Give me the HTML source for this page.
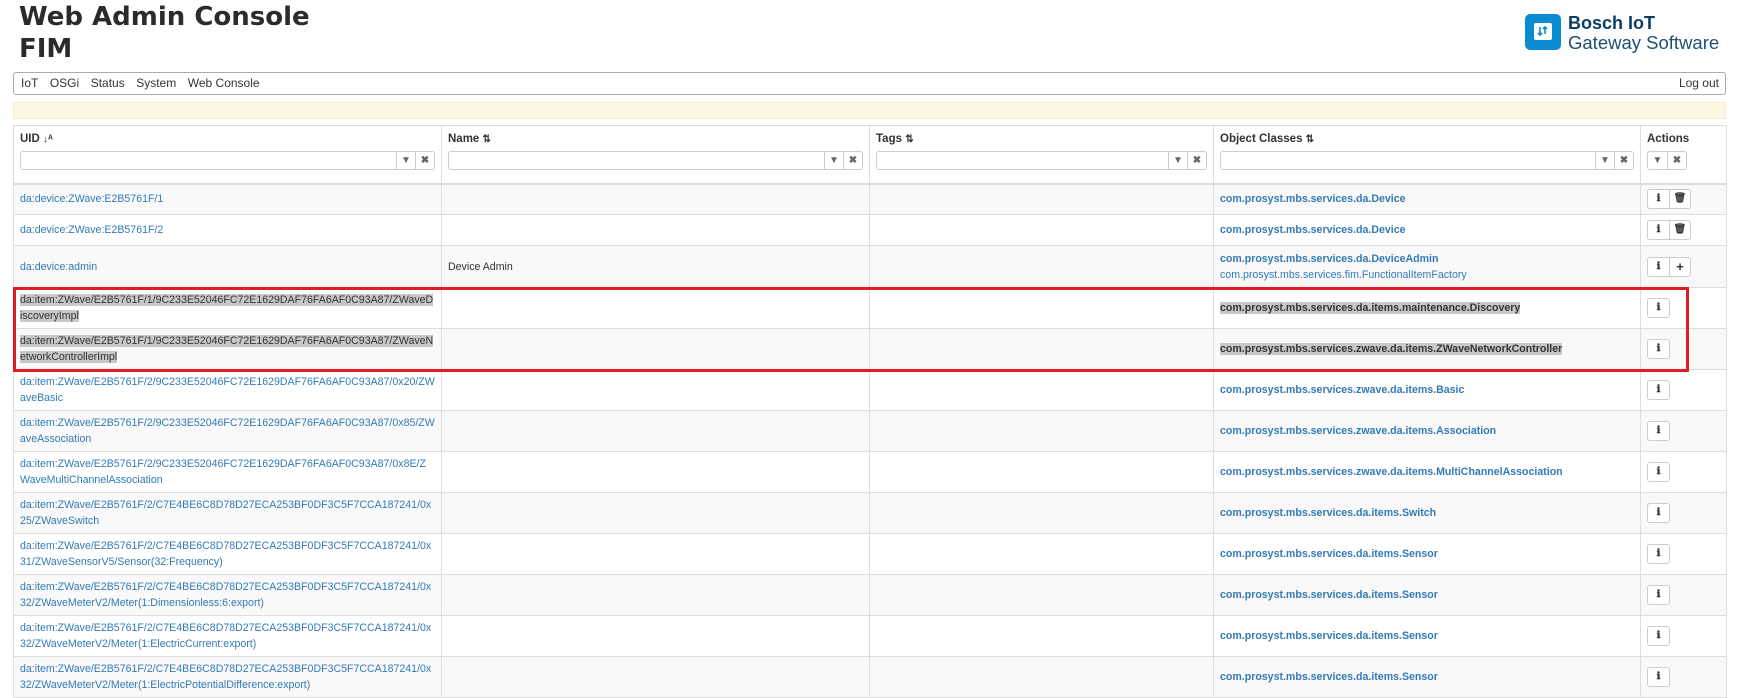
<!DOCTYPE html>
<html><head><meta charset="utf-8"><style>
*{box-sizing:border-box}
body{margin:0;width:1740px;height:694px;overflow:hidden;background:#fff;font-family:"Liberation Sans",Arial,sans-serif;color:#333;position:relative}
.t{position:absolute;left:19px;top:1px;font-family:"DejaVu Sans",sans-serif;font-weight:bold;font-size:26px;line-height:32px;color:#2b2b2b}
.logo{position:absolute;left:1525px;top:14px;width:36px;height:36px;background:#0a8bd2;border-radius:5px}
.lt{position:absolute;left:1568px;top:14px;line-height:19px;color:#0d3d66}
.nav{position:absolute;left:13px;top:72px;width:1713px;height:23px;border:1px solid #aaa;border-radius:3px;font-size:12px;line-height:21px;padding-left:7px}
.nav span{margin-right:11.5px}
.nav .r{position:absolute;right:6px;top:0;margin:0}
.warn{position:absolute;left:13px;top:102px;width:1713px;height:17px;background:#fcf8e3;border:1px solid #faebcc}
table{position:absolute;left:13px;top:125px;border-collapse:collapse;table-layout:fixed;width:1713px;font-size:10.6px}
td,th{border:1px solid #ddd;padding:0 6px;vertical-align:middle;text-align:left}
th{height:58px;vertical-align:top;padding-top:7px;font-size:11.5px;font-weight:bold;border-bottom:2px solid #ddd}
tr.o td{background:#f9f9f9}
a{color:#337ab7;text-decoration:none}
td{line-height:16px;word-break:break-all}
.b{font-weight:bold}
.f{display:flex;margin-top:6px;height:19px;border:1px solid #ccc;border-radius:3px}
.f i{flex:1}
.f b{width:19px;border-left:1px solid #ccc;font-size:10px;color:#666;text-align:center;line-height:17px}
.g{display:inline-flex;border:1px solid #ccc;border-radius:3px;height:20px;vertical-align:middle;background:#fff}
.g b{width:21px;text-align:center;font-size:10px;line-height:18px;color:#333}
.g b+b{border-left:1px solid #ccc}
.hl{background:#c8c8c8;color:#333}
.ar{color:#333;font-size:10px}
.red{position:absolute;left:13px;top:287px;width:1676px;height:85px;border:3px solid #e31b23}
</style></head><body>
<div class="t">Web Admin Console<br>FIM</div>
<div class="logo"><svg width="36" height="36" viewBox="0 0 36 36"><rect x="9" y="9" width="18" height="17" rx="2" fill="#fff"/><path d="M20 20V13M18 15l2-2 2 2M15 13v8M13 19l2 2 2-2" stroke="#0a8bd2" stroke-width="1.6" fill="none"/></svg></div>
<div class="lt"><div style="font-weight:bold;font-size:18px">Bosch IoT</div><div style="font-size:18.5px;color:#1f4f78">Gateway Software</div></div>
<div class="nav"><span>IoT</span><span>OSGi</span><span>Status</span><span>System</span><span>Web Console</span><span class="r">Log out</span></div>
<div class="warn"></div>
<table>
<colgroup><col style="width:428px"><col style="width:428px"><col style="width:344px"><col style="width:427px"><col style="width:86px"></colgroup>
<tr><th>UID <span class="ar">↓ᴬ</span><div class="f"><i></i><b>▼</b><b>✖</b></div></th><th>Name <span class="ar">⇅</span><div class="f"><i></i><b>▼</b><b>✖</b></div></th><th>Tags <span class="ar">⇅</span><div class="f"><i></i><b>▼</b><b>✖</b></div></th><th>Object Classes <span class="ar">⇅</span><div class="f"><i></i><b>▼</b><b>✖</b></div></th><th>Actions<div class="f" style="width:40px"><b style="border:0">▼</b><b>✖</b></div></th></tr>
<tr class="o" style="height:31px"><td><a>da:device:ZWave:E2B5761F/1</a></td><td></td><td></td><td><a class="b">com.prosyst.mbs.services.da.Device</a></td><td><span class="g"><b>ℹ</b><b>🗑</b></span></td></tr>
<tr style="height:31px"><td><a>da:device:ZWave:E2B5761F/2</a></td><td></td><td></td><td><a class="b">com.prosyst.mbs.services.da.Device</a></td><td><span class="g"><b>ℹ</b><b>🗑</b></span></td></tr>
<tr class="o" style="height:42px"><td><a>da:device:admin</a></td><td>Device Admin</td><td></td><td><a class="b">com.prosyst.mbs.services.da.DeviceAdmin</a><br><a>com.prosyst.mbs.services.fim.FunctionalItemFactory</a></td><td><span class="g"><b>ℹ</b><b style="font-size:13px">+</b></span></td></tr>
<tr style="height:41px"><td><span class="hl">da:item:ZWave/E2B5761F/1/9C233E52046FC72E1629DAF76FA6AF0C93A87/ZWaveDiscoveryImpl</span></td><td></td><td></td><td><span class="hl b">com.prosyst.mbs.services.da.items.maintenance.Discovery</span></td><td><span class="g"><b>ℹ</b></span></td></tr>
<tr class="o" style="height:41px"><td><span class="hl">da:item:ZWave/E2B5761F/1/9C233E52046FC72E1629DAF76FA6AF0C93A87/ZWaveNetworkControllerImpl</span></td><td></td><td></td><td><span class="hl b">com.prosyst.mbs.services.zwave.da.items.ZWaveNetworkController</span></td><td><span class="g"><b>ℹ</b></span></td></tr>
<tr style="height:41px"><td><a>da:item:ZWave/E2B5761F/2/9C233E52046FC72E1629DAF76FA6AF0C93A87/0x20/ZWaveBasic</a></td><td></td><td></td><td><a class="b">com.prosyst.mbs.services.zwave.da.items.Basic</a></td><td><span class="g"><b>ℹ</b></span></td></tr>
<tr class="o" style="height:41px"><td><a>da:item:ZWave/E2B5761F/2/9C233E52046FC72E1629DAF76FA6AF0C93A87/0x85/ZWaveAssociation</a></td><td></td><td></td><td><a class="b">com.prosyst.mbs.services.zwave.da.items.Association</a></td><td><span class="g"><b>ℹ</b></span></td></tr>
<tr style="height:41px"><td><a>da:item:ZWave/E2B5761F/2/9C233E52046FC72E1629DAF76FA6AF0C93A87/0x8E/ZWaveMultiChannelAssociation</a></td><td></td><td></td><td><a class="b">com.prosyst.mbs.services.zwave.da.items.MultiChannelAssociation</a></td><td><span class="g"><b>ℹ</b></span></td></tr>
<tr class="o" style="height:41px"><td><a>da:item:ZWave/E2B5761F/2/C7E4BE6C8D78D27ECA253BF0DF3C5F7CCA187241/0x25/ZWaveSwitch</a></td><td></td><td></td><td><a class="b">com.prosyst.mbs.services.da.items.Switch</a></td><td><span class="g"><b>ℹ</b></span></td></tr>
<tr style="height:41px"><td><a>da:item:ZWave/E2B5761F/2/C7E4BE6C8D78D27ECA253BF0DF3C5F7CCA187241/0x31/ZWaveSensorV5/Sensor(32:Frequency)</a></td><td></td><td></td><td><a class="b">com.prosyst.mbs.services.da.items.Sensor</a></td><td><span class="g"><b>ℹ</b></span></td></tr>
<tr class="o" style="height:41px"><td><a>da:item:ZWave/E2B5761F/2/C7E4BE6C8D78D27ECA253BF0DF3C5F7CCA187241/0x32/ZWaveMeterV2/Meter(1:Dimensionless:6:export)</a></td><td></td><td></td><td><a class="b">com.prosyst.mbs.services.da.items.Sensor</a></td><td><span class="g"><b>ℹ</b></span></td></tr>
<tr style="height:41px"><td><a>da:item:ZWave/E2B5761F/2/C7E4BE6C8D78D27ECA253BF0DF3C5F7CCA187241/0x32/ZWaveMeterV2/Meter(1:ElectricCurrent:export)</a></td><td></td><td></td><td><a class="b">com.prosyst.mbs.services.da.items.Sensor</a></td><td><span class="g"><b>ℹ</b></span></td></tr>
<tr class="o" style="height:41px"><td><a>da:item:ZWave/E2B5761F/2/C7E4BE6C8D78D27ECA253BF0DF3C5F7CCA187241/0x32/ZWaveMeterV2/Meter(1:ElectricPotentialDifference:export)</a></td><td></td><td></td><td><a class="b">com.prosyst.mbs.services.da.items.Sensor</a></td><td><span class="g"><b>ℹ</b></span></td></tr>
</table>
<div class="red"></div>
</body></html>
